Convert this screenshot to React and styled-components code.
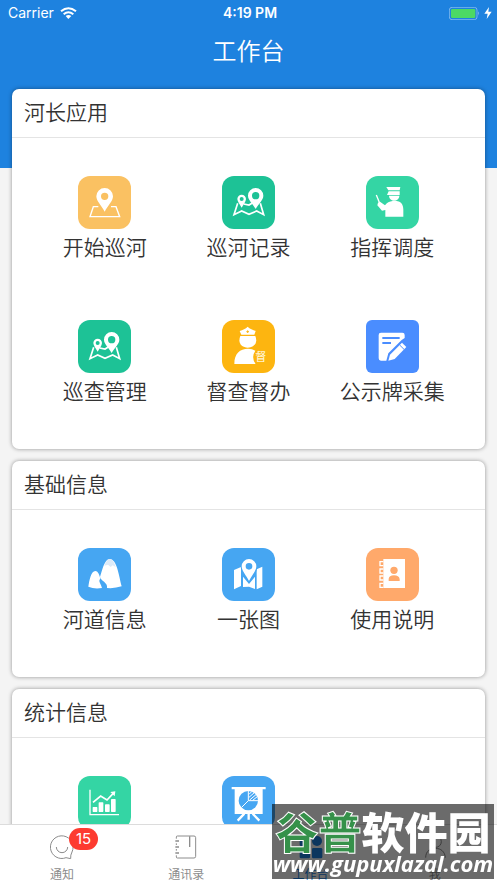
import styled, { createGlobalStyle } from "styled-components";

const GlobalStyle = createGlobalStyle`
  * {
    box-sizing: border-box;
  }
  body {
    margin: 0;
    background-color: #f4f4f4;
    color: #333;
    font-family: "Noto Sans CJK SC", sans-serif;
  }
`;

const Page = styled.div`
  display: flex;
  flex-direction: column;
  height: 100vh;
  overflow: hidden;
`;

const Content = styled.main`
  flex: 1;
  min-height: 0;
  overflow: hidden;
`;

const Hero = styled.header`
  background-color: #1e82df;
  color: #fff;
  padding-bottom: 94px;
`;

const StatusBar = styled.div`
  align-items: center;
  display: grid;
  grid-template-columns: 1fr auto 1fr;
  font-family: Inter, sans-serif;
  font-size: 14px;
  height: 26px;
  line-height: 26px;
  padding: 0 5px 0 8px;
`;

const Carrier = styled.div`
  align-items: center;
  display: flex;
  gap: 6px;
`;

const Clock = styled.time`
  font-weight: 600;
`;

const Power = styled.div`
  align-items: center;
  display: flex;
  gap: 4px;
  justify-content: flex-end;
`;

const PageTitle = styled.h1`
  font-size: 24px;
  font-weight: 350;
  line-height: 48px;
  margin: 0;
  text-align: center;
`;

const Cards = styled.div`
  display: flex;
  flex-direction: column;
  gap: 12px;
  margin-top: -79px;
  padding: 0 12px 12px;
`;

const Card = styled.section`
  background-color: #fff;
  border-radius: 7px;
  box-shadow: 0 0 4px rgba(0, 0, 0, 0.4);
  padding-bottom: 23px;
`;

const CardTitle = styled.h2`
  border-bottom: 1px solid #e4e4e4;
  font-size: 21px;
  font-weight: 350;
  line-height: 44px;
  margin: 0;
  padding: 0 12px 4px;
`;

const Grid = styled.div`
  display: grid;
  grid-template-columns: repeat(3, 1fr);
  padding: 0 21px;
`;

const AppButton = styled.button`
  align-items: center;
  background: none;
  border: none;
  color: inherit;
  cursor: pointer;
  display: flex;
  flex-direction: column;
  font-family: inherit;
  font-size: 21px;
  font-weight: 350;
  gap: 3px;
  height: 144px;
  line-height: 28px;
  padding: 38px 0 0;
  white-space: nowrap;
`;

const Tile = styled.svg`
  background-color: ${({ $color }) => $color};
  border-radius: ${({ $radius }) => $radius || "12px"};
  display: block;
  flex: none;
  height: 53px;
  width: 53px;
`;

const TabBar = styled.nav`
  background-color: #fff;
  border-top: 1px solid #dcdcdc;
  display: grid;
  flex: none;
  grid-template-columns: repeat(4, 1fr);
  height: 59px;
`;

const Tab = styled.a`
  align-items: center;
  color: ${({ $active }) => ($active ? "#1e82df" : "#8c8c8c")};
  display: flex;
  flex-direction: column;
  font-size: 12px;
  gap: 7px;
  line-height: 16px;
  padding-top: 10px;
  text-decoration: none;
`;

const TabIcon = styled.span`
  display: block;
  height: 24px;
  position: relative;
  svg {
    display: block;
  }
`;

const Badge = styled.span`
  background-color: #fd3b30;
  border-radius: 11px;
  color: #fff;
  font-family: Inter, sans-serif;
  font-size: 15px;
  height: 22px;
  left: 19px;
  line-height: 22px;
  position: absolute;
  text-align: center;
  top: -7px;
  width: 29px;
`;

const Watermark = styled.aside`
  align-items: center;
  background-color: rgba(0, 0, 0, 0.58);
  bottom: 4px;
  color: #fff;
  display: flex;
  flex-direction: column;
  height: 75px;
  padding-top: 5px;
  pointer-events: none;
  position: fixed;
  right: 3px;
  white-space: nowrap;
  width: 222px;
`;

const SiteName = styled.div`
  font-size: 43px;
  font-weight: 900;
  line-height: 43px;
`;

const Green = styled.span`
  color: #35914a;
  -webkit-text-stroke: 1px #fff;
`;

const SiteUrl = styled.div`
  font-family: "Open Sans", sans-serif;
  font-size: 22px;
  font-style: italic;
  font-weight: 700;
  line-height: 22px;
`;

const Pin = ({ x, y, r, hole, tip }) => (
  <path
    fill="#fff"
    fillRule="evenodd"
    d={`M${x} ${tip}C${x - r * 0.35} ${tip - r * 0.7} ${x - r} ${y + r * 0.6} ${x - r} ${y}
      a${r} ${r} 0 0 1 ${2 * r} 0C${x + r} ${y + r * 0.6} ${x + r * 0.35} ${tip - r * 0.7} ${x} ${tip}Z
      M${x - hole} ${y}a${hole} ${hole} 0 1 0 ${2 * hole} 0a${hole} ${hole} 0 1 0 ${-2 * hole} 0Z`}
  />
);

const StartIcon = () => (
  <Tile viewBox="0 0 159 159" $color="#fac162">
    <path d="M61 92H46L36 122H125L114 92H99" fill="none" stroke="#fff" strokeWidth="4" />
    <Pin x={80} y={61} r={25} hole={11} tip={107} />
  </Tile>
);

const RouteIcon = () => (
  <Tile viewBox="0 0 159 159" $color="#1dc296">
    <path
      d="M47 82L36 116L59 105L81 115L104 105L125 116L115 82M65 84L81 87L91 81"
      fill="none"
      stroke="#fff"
      strokeWidth="5"
    />
    <Pin x={59} y={69} r={13} hole={6} tip={95} />
    <Pin x={101} y={59} r={23} hole={11} tip={99} />
  </Tile>
);

const CommandIcon = () => (
  <Tile viewBox="0 0 159 159" $color="#34d5a4">
    <g fill="#fff">
      <path d="M61 33H103L101 43H67Z" />
      <path d="M68 46H101V57H63Z" />
      <path d="M69 59H100C99 79 70 79 69 59Z" />
      <path d="M58 122V102L48 104L34 88L36 80L42 77L57 88C63 79 70 76 80 75H91C105 76 112 86 112 101V122Z" />
    </g>
    <path d="M31 57L41 82" stroke="#fff" strokeWidth="4" />
  </Tile>
);

const SuperviseIcon = () => (
  <Tile viewBox="0 0 159 159" $color="#fdb510">
    <g fill="#fff">
      <path d="M53 33C62 30 71 26 77 20C83 26 93 30 101 33L97 44H58Z" />
      <path d="M55 48H100C109 70 94 83 77 83S46 70 55 48Z" />
      <path d="M37 132C37 100 54 86 78 86Q91 86 100 92Q86 112 101 132Z" />
    </g>
    <path d="M77 31V39M73 35H81" stroke="#fdb510" strokeWidth="3" />
    <text x="100" y="124" fill="#fff3d0" fontSize="33" fontWeight="500">
      督
    </text>
  </Tile>
);

const CollectIcon = () => (
  <Tile viewBox="0 0 159 159" $color="#4a8dff" $radius="6px">
    <path
      d="M45 38H109Q116 38 116 45V54L107 60L67 100L61 122H45Q38 122 38 115V45Q38 38 45 38Z"
      fill="#fff"
    />
    <path d="M49 54H101M49 69H75" stroke="#4a8dff" strokeWidth="6" />
    <path d="M108 68L121 81L86 117L67 122L72 104Z" fill="#fff" />
    <path d="M101 75L114 88" stroke="#4a8dff" strokeWidth="3" />
  </Tile>
);

const RiverIcon = () => (
  <Tile viewBox="0 0 159 159" $color="#46a6f2">
    <path d="M31 116C34 97 39 69 52 69C61 69 65 83 67 92C59 99 70 108 72 120Q49 124 31 116Z" fill="#fff" />
    <path
      d="M66 87C72 70 79 33 95 33C117 33 123 84 131 115Q110 122 87 120C91 104 67 98 66 87Z"
      fill="#fff"
    />
    <path d="M79 53C84 41 89 33 95 33C103 33 109 43 113 57L104 52L98 57L90 50Z" fill="#dceaf8" />
  </Tile>
);

const MapIcon = () => (
  <Tile viewBox="0 0 159 159" $color="#46a6f2">
    <g fill="#fff">
      <path d="M36 66L57 57V114L36 124Z" />
      <path d="M63 86L81 108L99 86V123L81 116L63 117Z" />
      <path d="M104 64L121 56V116L104 124Z" />
    </g>
    <path
      d="M81 99C71 86 59 73 59 55a22 22 0 0 1 44 0C103 73 91 86 81 99Z"
      fill="#46a6f2"
      stroke="#46a6f2"
      strokeWidth="6"
    />
    <Pin x={81} y={55} r={22} hole={10} tip={99} />
  </Tile>
);

const GuideIcon = () => (
  <Tile viewBox="0 0 159 159" $color="#ffa96b">
    <path d="M52 33H117V120H52Z" fill="#fff" />
    <path
      d="M52 41H42V53H52M52 63H42V75H52M52 84H42V96H52M52 106H42V118H52"
      fill="none"
      stroke="#fff"
      strokeWidth="4"
    />
    <circle cx="84" cy="67" r="11" fill="#ffa96b" />
    <path d="M68 99V93Q69 82 84 82T101 93V99Z" fill="#ffa96b" />
  </Tile>
);

const TrendIcon = () => (
  <Tile viewBox="0 0 159 159" $color="#34d5a4">
    <path d="M36 41V116H123" fill="none" stroke="#fff" strokeWidth="4" />
    <g fill="#fff">
      <rect x="44" y="93" width="14" height="15" rx="2" />
      <rect x="62" y="79" width="14" height="29" rx="2" />
      <rect x="81" y="85" width="14" height="23" rx="2" />
      <rect x="99" y="69" width="14" height="39" rx="2" />
      <path d="M97 48L112 46L110 61Z" />
    </g>
    <path d="M45 79L68 60L87 72L105 53" fill="none" stroke="#fff" strokeWidth="5" />
  </Tile>
);

const BoardIcon = () => (
  <Tile viewBox="0 0 159 159" $color="#46a6f2">
    <path d="M29 33H131V40H122V114H38V40H29Z" fill="#fff" />
    <path d="M67 113L47 134M80 113V131M92 113L112 134" stroke="#fff" strokeWidth="7" />
    <circle cx="79" cy="74" r="29" fill="#46a6f2" />
    <path d="M79 44V74L58 95M79 74H110" fill="none" stroke="#fff" strokeWidth="3" />
    <path d="M81 55L90 46M81 64L98 49M83 72L103 55M92 73L107 61" stroke="#fff" strokeWidth="3" />
  </Tile>
);

const NoticeIcon = () => (
  <svg width="24" height="24" viewBox="0 0 72 72" fill="none" stroke="currentColor" strokeWidth="3">
    <path d="M62 71L48 68A34 34 0 1 1 66 51Q61 60 62 71Z" />
    <path d="M19 36a17 17 0 0 0 34 0" />
  </svg>
);

const ContactsIcon = () => (
  <svg width="24" height="24" viewBox="0 0 72 72" fill="none" stroke="currentColor" strokeWidth="4">
    <path d="M7 11V6Q7 3 10 3H60Q65 3 65 8V64Q65 69 60 69H10Q7 69 7 66V61M7 25V30M7 42V47" strokeWidth="3" />
    <path d="M4 18H15M4 36H15M4 54H15M47 4V36" />
  </svg>
);

const WorkIcon = () => (
  <svg width="24" height="24" viewBox="0 0 72 72" fill="currentColor">
    <rect x="2" y="2" width="31" height="31" rx="4" />
    <circle cx="54" cy="18" r="15" />
    <rect x="2" y="39" width="31" height="31" rx="4" />
    <rect x="39" y="39" width="31" height="31" rx="4" />
  </svg>
);

const MeIcon = () => (
  <svg width="24" height="24" viewBox="0 0 72 72" fill="none" stroke="currentColor" strokeWidth="3">
    <circle cx="38" cy="20" r="17" />
    <path d="M8 68C8 47 23 40 38 40S66 50 67 68" />
  </svg>
);

const WifiIcon = () => (
  <svg width="17" height="12" viewBox="0 0 51 36" fill="none" stroke="#fff" strokeWidth="6">
    <path d="M3 13Q25 -6 48 13M11 22Q25 10 40 22" />
    <path d="M17 27Q25 21 34 27L25 36Z" fill="#fff" stroke="none" />
  </svg>
);

const BatteryIcon = () => (
  <svg width="31" height="13" viewBox="0 0 93 39">
    <rect x="1" y="1" width="83" height="37" rx="8" fill="none" stroke="#a5cdf2" strokeWidth="2" />
    <rect x="6" y="6" width="73" height="27" rx="4" fill="#4cd964" />
    <path d="M87 13Q92 19 87 26Z" fill="#a5cdf2" />
  </svg>
);

const BoltIcon = () => (
  <svg width="8" height="12" viewBox="0 0 24 36" fill="#fff">
    <path d="M15 0L1 20H11L8 36L23 14H13Z" />
  </svg>
);

const groups = [
  {
    title: "河长应用",
    apps: [
      { name: "开始巡河", Icon: StartIcon },
      { name: "巡河记录", Icon: RouteIcon },
      { name: "指挥调度", Icon: CommandIcon },
      { name: "巡查管理", Icon: RouteIcon },
      { name: "督查督办", Icon: SuperviseIcon },
      { name: "公示牌采集", Icon: CollectIcon },
    ],
  },
  {
    title: "基础信息",
    apps: [
      { name: "河道信息", Icon: RiverIcon },
      { name: "一张图", Icon: MapIcon },
      { name: "使用说明", Icon: GuideIcon },
    ],
  },
  {
    title: "统计信息",
    apps: [{ Icon: TrendIcon }, { Icon: BoardIcon }],
  },
];

const tabs = [
  { name: "通知", Icon: NoticeIcon, badge: 15 },
  { name: "通讯录", Icon: ContactsIcon },
  { name: "工作台", Icon: WorkIcon, active: true },
  { name: "我", Icon: MeIcon },
];

export default function App() {
  return (
    <Page>
      <GlobalStyle />
      <Content>
        <Hero>
          <StatusBar>
            <Carrier>
              Carrier
              <WifiIcon />
            </Carrier>
            <Clock>4:19 PM</Clock>
            <Power>
              <BatteryIcon />
              <BoltIcon />
            </Power>
          </StatusBar>
          <PageTitle>工作台</PageTitle>
        </Hero>
        <Cards>
          {groups.map(({ title, apps }) => (
            <Card key={title}>
              <CardTitle>{title}</CardTitle>
              <Grid>
                {apps.map(({ name, Icon }, index) => (
                  <AppButton key={index} type="button" aria-label={name || title}>
                    <Icon />
                    {name}
                  </AppButton>
                ))}
              </Grid>
            </Card>
          ))}
        </Cards>
      </Content>
      <TabBar>
        {tabs.map(({ name, Icon, badge, active }) => (
          <Tab key={name} href="#" $active={active}>
            <TabIcon>
              <Icon />
              {badge && <Badge>{badge}</Badge>}
            </TabIcon>
            {name}
          </Tab>
        ))}
      </TabBar>
      <Watermark>
        <SiteName>
          <Green>谷普</Green>软件园
        </SiteName>
        <SiteUrl>www.gupuxlazal.com</SiteUrl>
      </Watermark>
    </Page>
  );
}
